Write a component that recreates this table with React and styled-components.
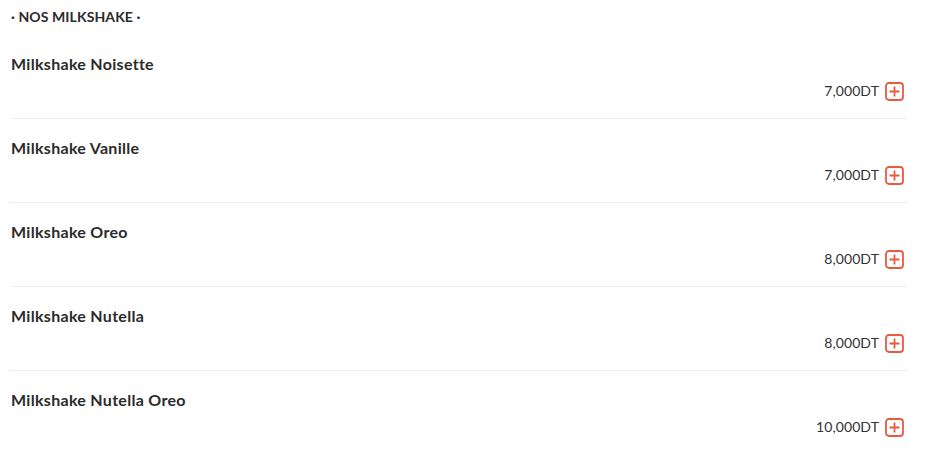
import styled, { createGlobalStyle } from "styled-components";

const GlobalStyle = createGlobalStyle`
  body {
    margin: 0;
    background: #fff;
    font-family: "Lato", "Open Sans", sans-serif;
    color: #333;
  }
`;

const Menu = styled.section`
  width: 897px;
  padding: 7px 0 0 10px;
`;

const Heading = styled.h2`
  margin: 0 0 8px 1px;
  font-size: 14px;
  line-height: 20px;
  font-weight: 700;
  letter-spacing: 0.1px;
  color: #2b2b2b;
  text-transform: uppercase;
`;

const Item = styled.div`
  display: flex;
  flex-direction: column;
  padding: 19px 0 17px;
  border-bottom: ${(p) => (p.$last ? "none" : "1px solid #ececec")};
`;

const Name = styled.div`
  margin-left: 1px;
  font-size: 16px;
  line-height: 20px;
  font-weight: 700;
  letter-spacing: 0.3px;
  color: #2b2b2b;
`;

const PriceRow = styled.div`
  margin-top: 7px;
  display: flex;
  justify-content: flex-end;
  align-items: center;
  gap: 6px;
  padding-right: 3px;
`;

const Price = styled.span`
  font-size: 14px;
  line-height: 20px;
  letter-spacing: 0.1px;
  color: #333;
`;

const AddButton = styled.button`
  width: 19px;
  height: 19px;
  padding: 0;
  border: none;
  background: none;
  cursor: pointer;
  display: flex;
  color: #ea5a3d;
`;

const PlusIcon = () => (
  <svg width="19" height="19" viewBox="0 0 19 19" fill="none">
    <rect x="1" y="1" width="17" height="17" rx="3" stroke="currentColor" strokeWidth="1.8" />
    <path d="M9.5 4.5v10M4.5 9.5h10" stroke="currentColor" strokeWidth="1.8" />
  </svg>
);

const items = [
  { name: "Milkshake Noisette", price: "7,000DT" },
  { name: "Milkshake Vanille", price: "7,000DT" },
  { name: "Milkshake Oreo", price: "8,000DT" },
  { name: "Milkshake Nutella", price: "8,000DT" },
  { name: "Milkshake Nutella Oreo", price: "10,000DT" },
];

export default function App() {
  return (
    <>
      <GlobalStyle />
      <Menu>
        <Heading>· Nos Milkshake ·</Heading>
        {items.map((item, i) => (
          <Item key={item.name} $last={i === items.length - 1}>
            <Name>{item.name}</Name>
            <PriceRow>
              <Price>{item.price}</Price>
              <AddButton aria-label="Ajouter">
                <PlusIcon />
              </AddButton>
            </PriceRow>
          </Item>
        ))}
      </Menu>
    </>
  );
}
